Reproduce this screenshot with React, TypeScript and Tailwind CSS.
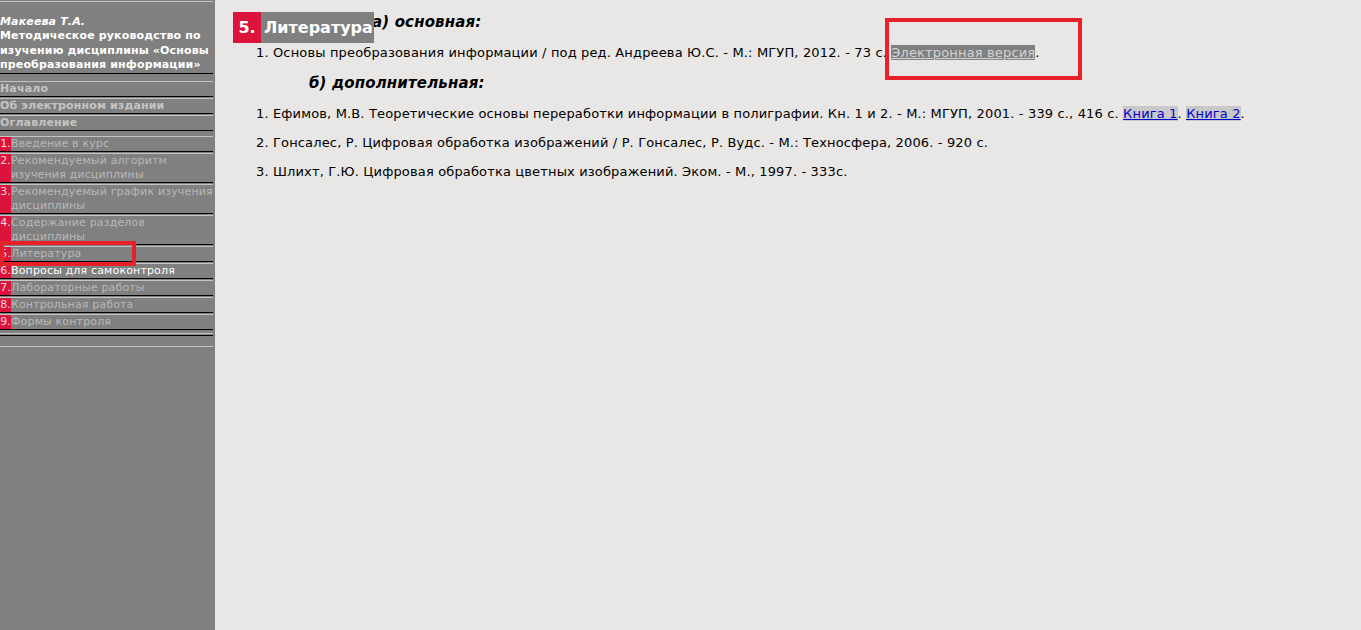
import React from "react";

const menuTop = ["Начало", "Об электронном издании", "Оглавление"];

const chapters = [
  { n: "1.", t: "Введение в курс" },
  { n: "2.", t: "Рекомендуемый алгоритм изучения дисциплины" },
  { n: "3.", t: "Рекомендуемый график изучения дисциплины" },
  { n: "4.", t: "Содержание разделов дисциплины" },
  { n: "5.", t: "Литература" },
  { n: "6.", t: "Вопросы для самоконтроля", active: true },
  { n: "7.", t: "Лабораторные работы" },
  { n: "8.", t: "Контрольная работа" },
  { n: "9.", t: "Формы контроля" },
];

const Sidebar = () => {
  return (
    <aside className="relative w-[215px] shrink-0 bg-[#808080] pt-[1px] text-[11px] leading-[14px] tracking-[0.15px]">
      <div className="mr-[2px] border-t border-b border-t-[#c4c4c4] border-b-black pt-[13px] font-bold text-white">
        <div className="italic">Макеева Т.А.</div>
        <div className="leading-[14.5px]">
          Методическое руководство по изучению дисциплины «Основы преобразования информации»
        </div>
      </div>
      <div className="mt-[7px]">
        {menuTop.map((m) => (
          <div
            key={m}
            className="mr-[2px] mb-[1px] border-t border-b border-t-[#c4c4c4] border-b-black font-bold text-[#c4c4c4]"
          >
            {m}
          </div>
        ))}
      </div>
      <div className="mt-[5px]">
        {chapters.map((c) => (
          <div
            key={c.n}
            className="mr-[2px] mb-[1px] flex border-t border-b border-t-[#c4c4c4] border-b-black"
          >
            <span className="flex w-[11px] shrink-0 justify-end overflow-hidden bg-[#dc143c] text-[#f2d6dc]">
              <span className="whitespace-nowrap">{c.n}</span>
            </span>
            <span className={c.active ? "text-white" : "text-[#b8b8b8]"}>{c.t}</span>
          </div>
        ))}
        <div className="mr-[2px] mt-[3px] h-[3px] border-t border-b border-t-[#c4c4c4] border-b-black" />
        <div className="mr-[2px] mt-[10px] border-t border-t-[#c4c4c4]" />
      </div>
      {/* annotation box */}
      <div className="absolute left-0 top-[241px] h-[25px] w-[136px] border-[4px] border-[#e8202a]" />
    </aside>
  );
};

const Content = () => {
  return (
    <main className="relative flex-1 pl-[41px] text-[13px] leading-[16px] tracking-[0.15px] text-black">
      <div className="absolute left-[18px] top-[12px] flex h-[31px] items-center text-[16px] font-bold tracking-normal text-white">
        <span className="flex h-full w-[28px] items-center justify-center bg-[#dc143c]">5.</span>
        <span className="flex h-full items-center bg-[#808080] pl-[3px] pr-[1px]">Литература</span>
      </div>
      <h3 className="mt-[13px] pl-[116px] text-[15px] font-bold italic leading-[18px]">а) основная:</h3>
      <p className="mt-[14px]">
        1. Основы преобразования информации / под ред. Андреева Ю.С. - М.: МГУП, 2012. - 73 с.{" "}
        <a href="#" className="bg-[#808080] text-[#d4d4d4] underline">
          Электронная версия
        </a>
        .
      </p>
      <h3 className="mt-[13px] pl-[53px] text-[15px] font-bold italic leading-[18px]">б) дополнительная:</h3>
      <p className="mt-[14px]">
        1. Ефимов, М.В. Теоретические основы переработки информации в полиграфии. Кн. 1 и 2. - М.: МГУП, 2001. - 339 с., 416 с.{" "}
        <a href="#" className="bg-[#c8c8c8] text-[#0000cc] underline">
          Книга 1
        </a>
        .{" "}
        <a href="#" className="bg-[#c8c8c8] text-[#0000cc] underline">
          Книга 2
        </a>
        .
      </p>
      <p className="mt-[13px]">
        2. Гонсалес, Р. Цифровая обработка изображений / Р. Гонсалес, Р. Вудс. - М.: Техносфера, 2006. - 920 с.
      </p>
      <p className="mt-[13px]">3. Шлихт, Г.Ю. Цифровая обработка цветных изображений. Эком. - М., 1997. - 333с.</p>
      {/* annotation box */}
      <div className="absolute left-[670px] top-[18px] h-[62px] w-[197px] border-[4px] border-[#e8202a]" />
    </main>
  );
};

export default function App() {
  return (
    <div className="flex min-h-[630px] w-full bg-[#e8e7e5] font-['DejaVu_Sans','Verdana',sans-serif]">
      <Sidebar />
      <Content />
    </div>
  );
}
